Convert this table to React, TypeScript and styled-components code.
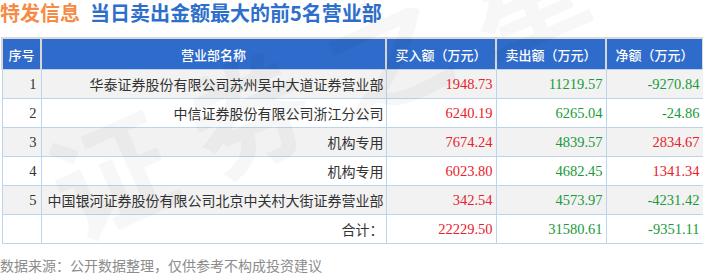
import React from 'react';
import styled, { createGlobalStyle } from 'styled-components';

const GlobalStyle = createGlobalStyle`
  html, body {
    margin: 0;
    padding: 0;
    background: #ffffff;
  }
  body {
    font-family: "Noto Sans CJK SC", "Noto Sans", sans-serif;
  }
`;

const Page = styled.div`
  position: relative;
  width: 703px;
  height: 274px;
  overflow: hidden;
  background: #fff;
`;

const TitleBar = styled.div`
  display: flex;
  align-items: center;
  gap: 10px;
  height: 26px;
  margin-bottom: 11px;
  font-size: 20px;
  font-weight: 700;
  line-height: 26px;
  white-space: nowrap;
`;

const TitleTag = styled.span`
  color: #f68b45;
`;

const TitleText = styled.span`
  color: #2d6fca;
`;

const Table = styled.table`
  position: relative;
  z-index: 1;
  width: 701px;
  margin-left: 1px;
  border-collapse: collapse;
  table-layout: fixed;
  border-top: 2px solid #dadada;
`;

const HeadCell = styled.th`
  height: 30px;
  padding: 0;
  background: #2f6bcb;
  color: #fff;
  font-size: 13px;
  font-weight: 500;
  text-align: center;
  border-left: 2px solid #d6d6d6;
  border-right: 2px solid #d6d6d6;
  white-space: nowrap;
`;

const Row = styled.tr<{ $shade: boolean }>`
  background: ${({ $shade }) => ($shade ? 'rgba(240,240,240,0.85)' : 'rgba(255,255,255,0.6)')};
`;

const Cell = styled.td<{ $tone?: 'red' | 'green' | 'plain'; $num?: boolean; $pad?: number }>`
  height: 28px;
  padding: 0 ${({ $pad }) => $pad ?? 3}px 0 0;
  border: 1px solid #bcd5ec;
  text-align: right;
  white-space: nowrap;
  overflow: visible;
  font-size: ${({ $num }) => ($num ? '14.5px' : '14px')};
  font-family: ${({ $num }) =>
    $num ? '"Liberation Serif", "Noto Sans CJK SC", serif' : '"Noto Sans CJK SC", sans-serif'};
  color: ${({ $tone }) =>
    $tone === 'red' ? '#e8222c' : $tone === 'green' ? '#1a9a3a' : '#333333'};
`;

const Footer = styled.div`
  margin-top: 13px;
  font-size: 14px;
  line-height: 16px;
  color: #8c8c8c;
  white-space: nowrap;
`;

const Watermark = styled.div`
  position: absolute;
  left: 20px;
  top: 115px;
  z-index: 2;
  font-size: 120px;
  font-weight: 700;
  color: rgba(0, 0, 0, 0.03);
  letter-spacing: 30px;
  transform: rotate(-24deg);
  transform-origin: left top;
  white-space: nowrap;
  pointer-events: none;
`;

type Item = { no: string; name: string; buy: string; sell: string; net: string };

const rows: Item[] = [
  { no: '1', name: '华泰证券股份有限公司苏州吴中大道证券营业部', buy: '1948.73', sell: '11219.57', net: '-9270.84' },
  { no: '2', name: '中信证券股份有限公司浙江分公司', buy: '6240.19', sell: '6265.04', net: '-24.86' },
  { no: '3', name: '机构专用', buy: '7674.24', sell: '4839.57', net: '2834.67' },
  { no: '4', name: '机构专用', buy: '6023.80', sell: '4682.45', net: '1341.34' },
  { no: '5', name: '中国银河证券股份有限公司北京中关村大街证券营业部', buy: '342.54', sell: '4573.97', net: '-4231.42' },
];

const toneOf = (v: string) => (v.startsWith('-') ? 'green' : 'red');

export default function App() {
  return (
    <Page>
      <GlobalStyle />
      <TitleBar>
        <TitleTag>特发信息</TitleTag>
        <TitleText>当日卖出金额最大的前5名营业部</TitleText>
      </TitleBar>
      <Table>
        <colgroup>
          <col style={{ width: 39 }} />
          <col style={{ width: 345 }} />
          <col style={{ width: 110 }} />
          <col style={{ width: 110 }} />
          <col style={{ width: 97 }} />
        </colgroup>
        <thead>
          <tr>
            <HeadCell>序号</HeadCell>
            <HeadCell>营业部名称</HeadCell>
            <HeadCell>买入额（万元）</HeadCell>
            <HeadCell>卖出额（万元）</HeadCell>
            <HeadCell>净额（万元）</HeadCell>
          </tr>
        </thead>
        <tbody>
          {rows.map((r, i) => (
            <Row key={r.no} $shade={i % 2 === 0}>
              <Cell $num $tone="plain" $pad={4}>{r.no}</Cell>
              <Cell $tone="plain" $pad={2}>{r.name}</Cell>
              <Cell $num $tone="red">{r.buy}</Cell>
              <Cell $num $tone="green">{r.sell}</Cell>
              <Cell $num $tone={toneOf(r.net)}>{r.net}</Cell>
            </Row>
          ))}
          <Row $shade={false}>
            <Cell />
            <Cell $tone="plain" $pad={2}>合计：</Cell>
            <Cell $num $tone="red">22229.50</Cell>
            <Cell $num $tone="green">31580.61</Cell>
            <Cell $num $tone="green">-9351.11</Cell>
          </Row>
        </tbody>
      </Table>
      <Footer>数据来源：公开数据整理，仅供参考不构成投资建议</Footer>
      <Watermark>证券之星</Watermark>
    </Page>
  );
}
